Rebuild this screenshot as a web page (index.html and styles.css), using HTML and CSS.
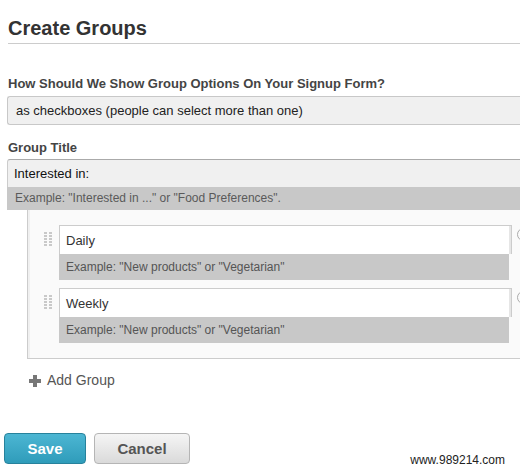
FILE: index.html
```html
<!DOCTYPE html>
<html lang="en">
<head>
    <meta charset="UTF-8">
    <meta name="viewport" content="width=device-width, initial-scale=1.0">
    <title>Create Groups</title>
    <link rel="stylesheet" href="styles.css">
</head>
<body>
    <div class="form">
        <h1 class="title">Create Groups</h1>

        <div class="field-label first">How Should We Show Group Options On Your Signup Form?</div>
        <div class="select">as checkboxes (people can select more than one)</div>

        <div class="field-label second">Group Title</div>
        <div class="title-input">Interested in:</div>
        <div class="title-hint">Example: "Interested in ..." or "Food Preferences".</div>

        <div class="options">
            <div class="option">
                <svg class="handle" width="8" height="16" viewBox="0 0 8 16">
                    <g fill="#c9c9c9">
                        <rect x="0" y="0" width="3" height="2"/><rect x="5" y="0" width="3" height="2"/>
                        <rect x="0" y="3" width="3" height="2"/><rect x="5" y="3" width="3" height="2"/>
                        <rect x="0" y="6" width="3" height="2"/><rect x="5" y="6" width="3" height="2"/>
                        <rect x="0" y="9" width="3" height="2"/><rect x="5" y="9" width="3" height="2"/>
                        <rect x="0" y="12" width="3" height="2"/><rect x="5" y="12" width="3" height="2"/>
                    </g>
                </svg>
                <div class="option-body">
                    <div class="option-input">Daily</div>
                    <div class="option-hint">Example: "New products" or "Vegetarian"</div>
                </div>
                <span class="remove"></span>
            </div>
            <div class="option">
                <svg class="handle" width="8" height="16" viewBox="0 0 8 16">
                    <g fill="#c9c9c9">
                        <rect x="0" y="0" width="3" height="2"/><rect x="5" y="0" width="3" height="2"/>
                        <rect x="0" y="3" width="3" height="2"/><rect x="5" y="3" width="3" height="2"/>
                        <rect x="0" y="6" width="3" height="2"/><rect x="5" y="6" width="3" height="2"/>
                        <rect x="0" y="9" width="3" height="2"/><rect x="5" y="9" width="3" height="2"/>
                        <rect x="0" y="12" width="3" height="2"/><rect x="5" y="12" width="3" height="2"/>
                    </g>
                </svg>
                <div class="option-body">
                    <div class="option-input">Weekly</div>
                    <div class="option-hint">Example: "New products" or "Vegetarian"</div>
                </div>
                <span class="remove"></span>
            </div>
        </div>

        <div class="add-group">
            <svg width="12" height="12" viewBox="0 0 12 12">
                <path d="M4 0h4v4h4v4H8v4H4V8H0V4h4z" fill="#777"/>
            </svg>
            <span>Add Group</span>
        </div>

        <div class="actions">
            <button class="btn save">Save</button>
            <button class="btn cancel">Cancel</button>
        </div>
    </div>
    <div class="watermark">www.989214.com</div>
</body>
</html>
```

FILE: styles.css
```css
body {
    margin: 0;
    font-family: "Liberation Sans", Arial, sans-serif;
    background-color: #ffffff;
    color: #333;
    overflow: hidden;
    position: relative;
    height: 469px;
}
.form {
    width: 520px;
}
.title {
    margin: 0 0 0 8px;
    padding: 16px 0 3px;
    font-size: 20px;
    line-height: 24px;
    font-weight: bold;
    color: #333;
    border-bottom: 1px solid #cccccc;
}
.field-label {
    margin-left: 8px;
    font-size: 13px;
    line-height: 16px;
    font-weight: bold;
    color: #444;
}
.field-label.first {
    margin-top: 32px;
}
.field-label.second {
    margin-top: 15px;
}
.select {
    margin: 4px 0 0 7px;
    box-sizing: border-box;
    height: 29px;
    padding-left: 8px;
    background-color: #f0f0f0;
    border: 1px solid #c8c8c8;
    border-right: none;
    border-radius: 3px 0 0 3px;
    font-size: 13px;
    line-height: 27px;
    color: #222;
}
.title-input {
    margin: 3px 0 0 7px;
    box-sizing: border-box;
    height: 28px;
    padding-left: 6px;
    background-color: #f0f0f0;
    border-top: 1px solid #aaaaaa;
    border-left: 1px solid #cccccc;
    border-radius: 3px 0 0 0;
    font-size: 13px;
    line-height: 27px;
    color: #111;
}
.title-hint {
    margin-left: 7px;
    height: 23px;
    padding-left: 8px;
    background-color: #c8c8c8;
    font-size: 12px;
    line-height: 23px;
    color: #5a5a5a;
}
.options {
    margin-left: 27px;
    padding: 15px 0 15px 16px;
    background-color: #fafafa;
    border-left: 1px solid #cccccc;
    border-bottom: 1px solid #cccccc;
    box-shadow: inset 2px 0 0 #f0f0f0;
    overflow: hidden;
}
.option {
    display: flex;
    align-items: flex-start;
    gap: 7px;
}
.option + .option {
    margin-top: 8px;
}
.handle {
    margin-top: 7px;
    flex-shrink: 0;
}
.option-body {
    width: 453px;
    flex-shrink: 0;
}
.option-input {
    box-sizing: border-box;
    height: 29px;
    padding: 1px 0 0 6px;
    background-color: #ffffff;
    border: 1px solid #cccccc;
    border-bottom: none;
    box-shadow: inset -2px 0 0 #e6e6e6;
    font-size: 13px;
    line-height: 27px;
    color: #333;
}
.option-hint {
    width: 450px;
    box-sizing: border-box;
    height: 26px;
    padding-left: 7px;
    background-color: #c8c8c8;
    font-size: 12px;
    line-height: 26px;
    color: #555;
}
.remove {
    margin: 3px 0 0 -2px;
    width: 11px;
    height: 11px;
    border: 1px solid #aaaaaa;
    border-radius: 50%;
    flex-shrink: 0;
}
.add-group {
    margin: 13px 0 0 29px;
    display: flex;
    align-items: center;
    gap: 6px;
    font-size: 14px;
    line-height: 17px;
    color: #555;
}
.actions {
    margin: 44px 0 0 4px;
    display: flex;
    gap: 8px;
}
.btn {
    height: 31px;
    border-radius: 4px;
    font-family: "Liberation Sans", Arial, sans-serif;
    font-size: 15px;
    font-weight: bold;
    cursor: pointer;
}
.save {
    width: 82px;
    color: #ffffff;
    background: linear-gradient(#4cb6d3, #2f9cba);
    border: 1px solid #27829c;
}
.cancel {
    width: 96px;
    color: #555;
    background: linear-gradient(#f5f5f5, #dadada);
    border: 1px solid #b5b5b5;
}
.watermark {
    position: absolute;
    right: 15px;
    top: 453px;
    font-size: 12px;
    line-height: 15px;
    color: #222;
    background-color: rgba(255, 255, 255, 0.8);
}
```
